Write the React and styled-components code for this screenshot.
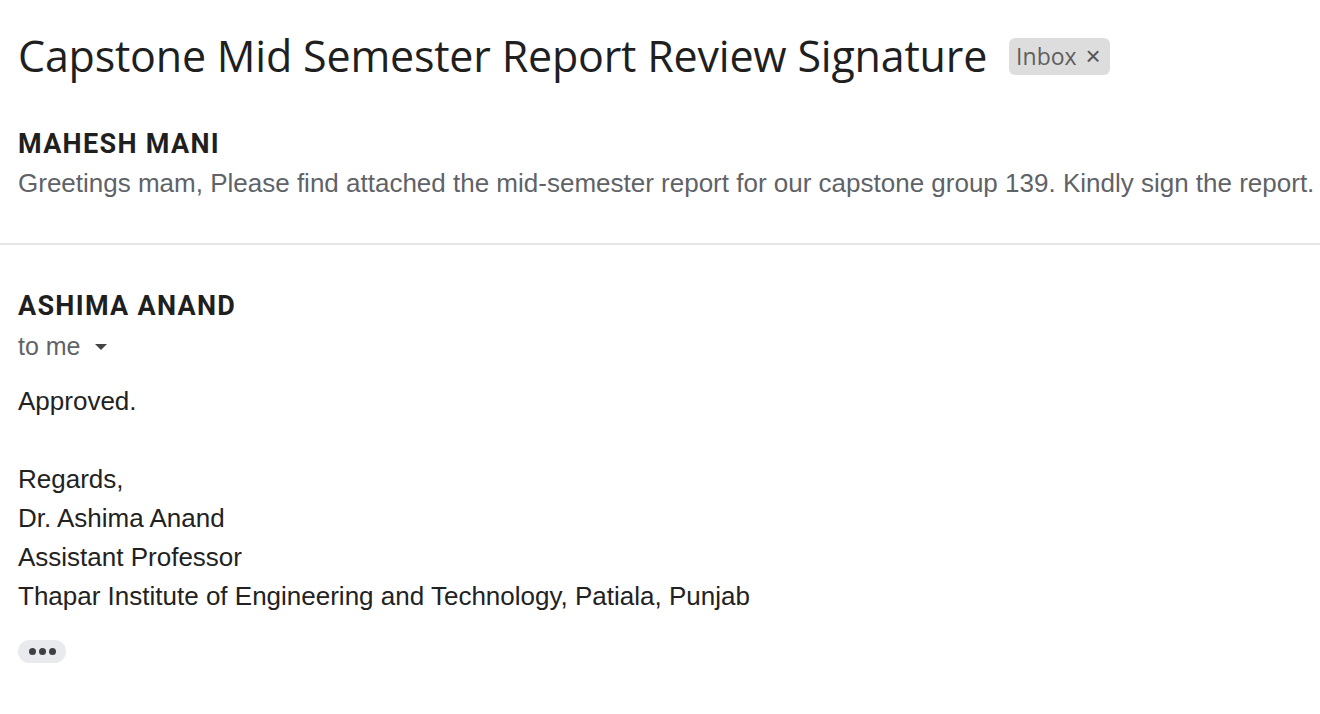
import React from 'react';
import styled, { createGlobalStyle } from 'styled-components';

const GlobalStyle = createGlobalStyle`
  body {
    margin: 0;
    background: #ffffff;
    font-family: 'Liberation Sans', Arial, sans-serif;
  }
`;

const Page = styled.div`
  width: 1320px;
  height: 714px;
  overflow: hidden;
  background: #fff;
`;

const SubjectRow = styled.div`
  display: flex;
  align-items: center;
  gap: 22px;
  padding: 24px 18px 0 18px;
  height: 62px;
`;

const Subject = styled.h1`
  margin: 0;
  font-family: 'Open Sans', sans-serif;
  font-weight: 400;
  font-size: 43px;
  color: #1f1f1f;
  letter-spacing: -0.2px;
  white-space: nowrap;
`;

const Chip = styled.span`
  display: inline-flex;
  align-items: center;
  box-sizing: border-box;
  gap: 9px;
  height: 37px;
  margin-top: 2px;
  padding: 0 9px 0 7px;
  border-radius: 6px;
  background: #dddddd;
  color: #5f5f5f;
  font-family: 'Open Sans', sans-serif;
  font-size: 23px;
  line-height: 37px;
`;

const ChipClose = styled.span`
  font-family: 'Liberation Sans', sans-serif;
  font-size: 26px;
  line-height: 1;
  color: #555;
`;

const Message = styled.section`
  padding: 0 18px;
  border-bottom: ${p => (p.$divider ? '2px solid #e6e6e6' : 'none')};
`;

const Sender = styled.div`
  font-family: 'Roboto', sans-serif;
  font-weight: 700;
  font-size: 27px;
  color: #1f1f1f;
  letter-spacing: 1.3px;
  line-height: 30px;
`;

const Snippet = styled.div`
  font-size: 26px;
  color: #5f6368;
  line-height: 40px;
  margin-top: 4px;
  white-space: nowrap;
`;

const Recipient = styled.div`
  display: flex;
  align-items: center;
  gap: 14px;
  font-size: 25px;
  color: #5f6368;
  line-height: 40px;
  margin-top: 5px;
`;

const Caret = styled.span`
  width: 0;
  height: 0;
  margin-top: 2px;
  border-left: 6px solid transparent;
  border-right: 6px solid transparent;
  border-top: 6px solid #444;
`;

const Body = styled.div`
  margin-top: 16px;
  font-size: 26px;
  color: #222;
  line-height: 39px;
`;

const Line = styled.div`
  min-height: 39px;
`;

const MoreButton = styled.button`
  display: flex;
  align-items: center;
  justify-content: center;
  gap: 3px;
  margin-top: 24px;
  width: 48px;
  height: 23px;
  padding: 0;
  border: none;
  border-radius: 12px;
  background: #e8eaed;
`;

const Dot = styled.span`
  width: 7px;
  height: 7px;
  border-radius: 50%;
  background: #3c4043;
`;

export default function App() {
  return (
    <Page>
      <GlobalStyle />
      <SubjectRow>
        <Subject>Capstone Mid Semester Report Review Signature</Subject>
        <Chip>
          Inbox<ChipClose>×</ChipClose>
        </Chip>
      </SubjectRow>
      <Message $divider style={{ paddingTop: 43, paddingBottom: 40 }}>
        <Sender>MAHESH MANI</Sender>
        <Snippet>
          Greetings mam, Please find attached the mid-semester report for our capstone group 139. Kindly sign the report.
        </Snippet>
      </Message>
      <Message style={{ paddingTop: 46 }}>
        <Sender>ASHIMA ANAND</Sender>
        <Recipient>
          to me <Caret />
        </Recipient>
        <Body>
          <Line>Approved.</Line>
          <Line />
          <Line>Regards,</Line>
          <Line>Dr. Ashima Anand</Line>
          <Line>Assistant Professor</Line>
          <Line>Thapar Institute of Engineering and Technology, Patiala, Punjab</Line>
        </Body>
        <MoreButton aria-label="Show trimmed content">
          <Dot />
          <Dot />
          <Dot />
        </MoreButton>
      </Message>
    </Page>
  );
}
